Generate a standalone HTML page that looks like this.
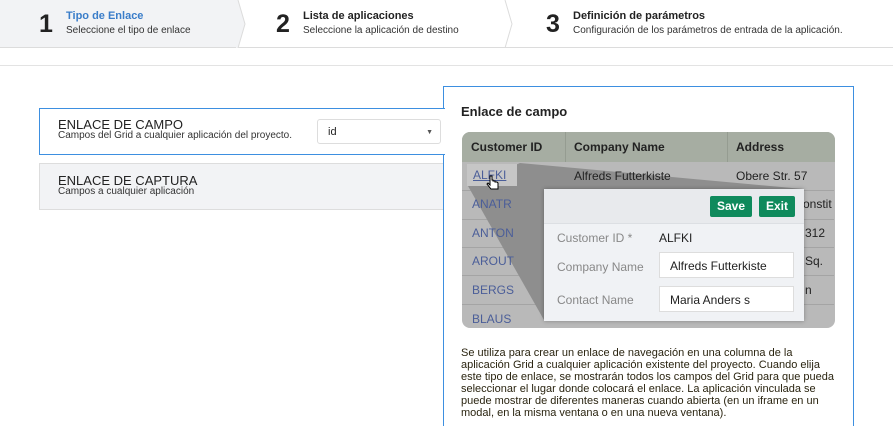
<!DOCTYPE html>
<html><head><meta charset="utf-8"><style>
*{box-sizing:border-box;margin:0;padding:0}
body{width:893px;height:422px;overflow:hidden;background:#fff;font-family:"Liberation Sans",sans-serif;position:relative;color:#222}
.a{position:absolute}
.hdr{position:absolute;left:0;top:0;width:893px;height:48px;border-bottom:1px solid #dcdcdc;background:#fff}
.num{position:absolute;font-size:25px;font-weight:bold;color:#222;top:10px;line-height:28px}
.st{position:absolute;font-size:11px;font-weight:bold;top:10px;line-height:13px}
.sd{position:absolute;font-size:10px;top:25px;color:#333;line-height:12px}
.row{position:absolute;left:0;width:372px;border-top:1px solid #a4a4a4;font-size:12px}
.cid{position:absolute;left:10px;color:#4b5e99;font-size:12px;line-height:14px}
.lbl{position:absolute;left:13px;font-size:12px;color:#888;line-height:14px}
.inp{position:absolute;left:115px;width:135px;height:26px;background:#fff;border:1px solid #ddd;font-size:12px;line-height:14px;padding:6px 10px;color:#222}
.btn{position:absolute;top:7px;height:21px;background:#0f8a5c;color:#fff;font-size:12px;line-height:13px;font-weight:bold;padding:4px 7px;border-radius:2px}
.t{line-height:14px}
</style></head><body>
<div class="hdr">
  <div class="a" style="left:0;top:0;width:238px;height:47px;background:#f2f3f5"></div>
  <svg class="a" style="left:236px;top:0" width="12" height="48"><polygon points="0,0 2,0 9,24 2,48 0,48" fill="#f2f3f5"/><polyline points="2,0 9,24 2,48" fill="none" stroke="#dcdcdc"/></svg>
  <svg class="a" style="left:503px;top:0" width="12" height="48"><polyline points="2,0 9,24 2,48" fill="none" stroke="#dcdcdc"/></svg>
  <div class="num" style="left:39px">1</div>
  <div class="st" style="left:66px;color:#3a7dc9">Tipo de Enlace</div>
  <div class="sd" style="left:66px">Seleccione el tipo de enlace</div>
  <div class="num" style="left:276px">2</div>
  <div class="st" style="left:303px">Lista de aplicaciones</div>
  <div class="sd" style="left:303px">Seleccione la aplicación de destino</div>
  <div class="num" style="left:546px">3</div>
  <div class="st" style="left:573px">Definición de parámetros</div>
  <div class="sd" style="left:573px">Configuración de los parámetros de entrada de la aplicación.</div>
</div>
<div class="a" style="left:0;top:65px;width:893px;height:1px;background:#e3e3e3"></div>

<div class="a" style="left:443px;top:86px;width:411px;height:340px;border:1px solid #3d8fe0;border-bottom:none;background:#fff"></div>
<div class="a" style="left:39px;top:108px;width:406px;height:47px;border:1px solid #3d8fe0;border-right:none;background:#fff"></div>
<div class="a" style="left:58px;top:118px;font-size:13px;line-height:14px">ENLACE DE CAMPO</div>
<div class="a" style="left:58px;top:130px;font-size:10px;line-height:12px;color:#333">Campos del Grid a cualquier aplicación del proyecto.</div>
<div class="a" style="left:317px;top:119px;width:124px;height:25px;border:1px solid #ddd;border-radius:3px;font-size:11px;line-height:12px;padding:6px 10px">id<span style="position:absolute;right:7px;top:7px;font-size:7px;color:#555">▼</span></div>
<div class="a" style="left:39px;top:163px;width:404px;height:47px;border:1px solid #ddd;border-right:none;background:#f2f3f5"></div>
<div class="a" style="left:58px;top:174px;font-size:13px;line-height:14px">ENLACE DE CAPTURA</div>
<div class="a" style="left:58px;top:186px;font-size:10px;line-height:12px;color:#333">Campos a cualquier aplicación</div>

<div class="a" style="left:461px;top:104px;font-size:13px;line-height:15px;font-weight:bold;color:#222">Enlace de campo</div>

<div class="a" style="left:462px;top:132px;width:373px;height:196px;border-radius:8px;overflow:hidden;background:#b9b9b9">
  <div class="a" style="left:0;top:0;width:373px;height:30px;background:#a6ada2;font-size:12px;font-weight:bold;color:#222">
    <span class="a t" style="left:9px;top:8px">Customer ID</span>
    <span class="a" style="left:103px;top:0;width:1px;height:30px;background:#959c91"></span>
    <span class="a t" style="left:112px;top:8px">Company Name</span>
    <span class="a" style="left:265px;top:0;width:1px;height:30px;background:#959c91"></span>
    <span class="a t" style="left:274px;top:8px">Address</span>
  </div>
  <div class="row" style="top:58px"></div><div class="row" style="top:87px"></div><div class="row" style="top:115px"></div><div class="row" style="top:143px"></div><div class="row" style="top:172px"></div>
  <svg class="a" style="left:0;top:0" width="373" height="196"><polygon points="6,54 58,31 341,57 82,188" fill="#8e8e8e"/></svg>
  <div class="a" style="left:5px;top:32px;width:50px;height:22px;background:#c6c6c6"></div>
  <span class="cid" style="top:36px;left:11px;text-decoration:underline">ALFKI</span>
  <svg class="a" style="left:24px;top:43px" width="14" height="16"><path d="M4 1v9l-2-2-1 1 4 5h7v-6l-1-1h-2v-1h-2v-1H6V1z" fill="#fff" stroke="#000" stroke-width="1"/></svg>
  <span class="a t" style="left:112px;top:37px;font-size:12px">Alfreds Futterkiste</span>
  <span class="a t" style="left:274px;top:37px;font-size:12px">Obere Str. 57</span>
  <span class="cid" style="top:65px">ANATR</span><span class="a t" style="left:341px;top:65px;font-size:12px">onstit</span>
  <span class="cid" style="top:94px">ANTON</span><span class="a t" style="left:343px;top:94px;font-size:12px">312</span>
  <span class="cid" style="top:122px">AROUT</span><span class="a t" style="left:343px;top:122px;font-size:12px">Sq.</span>
  <span class="cid" style="top:151px">BERGS</span><span class="a t" style="left:343px;top:151px;font-size:12px">n</span>
  <span class="cid" style="top:180px">BLAUS</span>
  <div class="a" style="left:82px;top:57px;width:260px;height:132px;background:#f0f2f5;box-shadow:0 0 4px rgba(0,0,0,.3)">
    <div class="a" style="left:0;top:0;width:260px;height:35px;background:#e8eaed;border-bottom:1px solid #dcdfe3"></div>
    <div class="btn" style="left:166px">Save</div>
    <div class="btn" style="left:215px">Exit</div>
    <span class="lbl" style="top:42px">Customer ID *</span>
    <span class="a t" style="left:115px;top:42px;font-size:12px">ALFKI</span>
    <span class="lbl" style="top:71px">Company Name</span>
    <div class="inp" style="top:63px">Alfreds Futterkiste</div>
    <span class="lbl" style="top:104px">Contact Name</span>
    <div class="inp" style="top:97px">Maria Anders s</div>
  </div>
</div>

<div class="a" style="left:461px;top:347px;width:380px;font-size:11px;line-height:12px;color:#2a2410">Se utiliza para crear un enlace de navegación en una columna de la aplicación Grid a cualquier aplicación existente del proyecto. Cuando elija este tipo de enlace, se mostrarán todos los campos del Grid para que pueda seleccionar el lugar donde colocará el enlace. La aplicación vinculada se puede mostrar de diferentes maneras cuando abierta (en un iframe en un modal, en la misma ventana o en una nueva ventana).</div>
</body></html>
